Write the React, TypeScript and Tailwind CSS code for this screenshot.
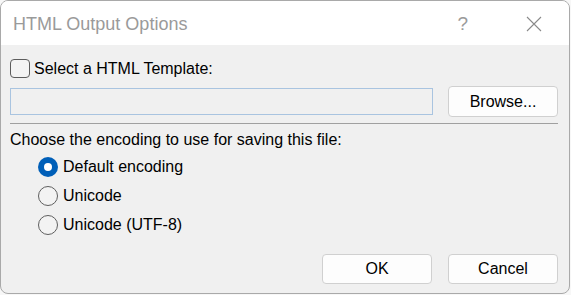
import { useState } from "react";

const font = { fontFamily: '"Segoe UI", "Liberation Sans", Arial, sans-serif' };

function Radio({ checked, label, onSelect }: { checked: boolean; label: string; onSelect: () => void }) {
  return (
    <button type="button" onClick={onSelect} className="flex h-[29px] items-center gap-[5px] text-left">
      {checked ? (
        <span className="flex h-[20px] w-[20px] items-center justify-center rounded-full bg-[#005fb8]">
          <span className="h-[8px] w-[8px] rounded-full bg-white" />
        </span>
      ) : (
        <span className="h-[20px] w-[20px] rounded-full border border-[#5f5f5f] bg-[#f3f3f3]" />
      )}
      <span className="text-[16px] text-black">{label}</span>
    </button>
  );
}

export default function App() {
  const [useTemplate, setUseTemplate] = useState(false);
  const [encoding, setEncoding] = useState("default");

  return (
    <div className="h-[295px] w-[571px] bg-[#f7f7f7]" style={font}>
      <div className="flex h-[294px] w-[570px] flex-col overflow-hidden rounded-[8px] border border-[#a9a9a9] bg-[#f0f0f0]">
        {/* title bar */}
        <div className="flex h-[44px] shrink-0 items-center bg-white pl-[12px] pt-[2px]">
          <span className="text-[18px] text-[#9a9a9a]">HTML Output Options</span>
          <span className="ml-auto mr-[58px] text-[19px] font-light text-[#9a9a9a]">?</span>
          <svg width="16" height="16" viewBox="0 0 16 16" className="mr-[27px]" aria-hidden>
            <path d="M1 1 L15 15 M15 1 L1 15" stroke="#8a8a8a" strokeWidth="1.1" fill="none" />
          </svg>
        </div>

        <div className="flex flex-1 flex-col pl-[9px] pr-[11px]">
          <button
            type="button"
            onClick={() => setUseTemplate(!useTemplate)}
            className="mt-[14px] flex h-[19px] items-center gap-[4px] text-left"
          >
            <span className="h-[19px] w-[20px] rounded-[4px] border border-[#5c5c5c] bg-[#f3f3f3]" />
            <span className="text-[16px] text-black">Select a HTML Template:</span>
          </button>

          <div className="mt-[8px] flex h-[31px] items-center gap-[15px]">
            <input
              type="text"
              disabled={!useTemplate}
              className="h-[27px] flex-1 border border-[#a9c4e0] bg-[#f0f0f0] px-1 text-[16px] outline-none"
            />
            <button
              type="button"
              className="h-[31px] w-[110px] rounded-[4px] border border-[#d0d0d0] bg-[#fdfdfd] text-[16px] text-black"
            >
              Browse...
            </button>
          </div>

          <div className="mt-[6px] h-px bg-[#a0a0a0]" />

          <div className="mt-[6px] h-[20px] text-[16px] leading-[20px] text-black">
            Choose the encoding to use for saving this file:
          </div>

          <div className="mt-[2px] flex flex-col pl-[28px]">
            <Radio checked={encoding === "default"} label="Default encoding" onSelect={() => setEncoding("default")} />
            <Radio checked={encoding === "unicode"} label="Unicode" onSelect={() => setEncoding("unicode")} />
            <Radio checked={encoding === "utf8"} label="Unicode (UTF-8)" onSelect={() => setEncoding("utf8")} />
          </div>

          <div className="mt-[15px] flex justify-end gap-[16px]">
            <button
              type="button"
              className="h-[30px] w-[110px] rounded-[4px] border border-[#d0d0d0] bg-[#fdfdfd] text-[16px] text-black"
            >
              OK
            </button>
            <button
              type="button"
              className="h-[30px] w-[110px] rounded-[4px] border border-[#d0d0d0] bg-[#fdfdfd] text-[16px] text-black"
            >
              Cancel
            </button>
          </div>
        </div>
      </div>
    </div>
  );
}
